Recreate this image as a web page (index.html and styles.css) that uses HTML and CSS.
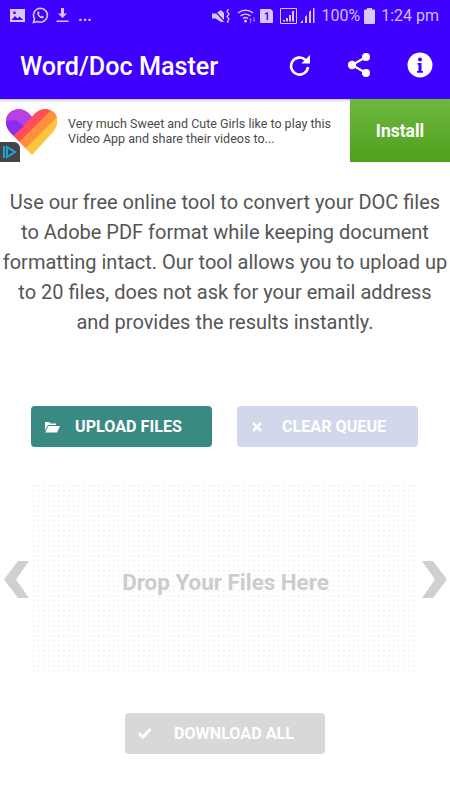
FILE: index.html
```html
<!DOCTYPE html>
<html lang="en">
<head>
    <meta charset="UTF-8">
    <meta name="viewport" content="width=device-width, initial-scale=1.0">
    <title>Word/Doc Master</title>
    <link rel="stylesheet" href="styles.css">
</head>
<body>
    <header class="top">
        <div class="status-bar">
            <div class="status-left">
                <svg class="s-icon" width="15" height="13" viewBox="0 0 15 13"><path fill="#d9c8ff" d="M0 0h15v13H0z"/><path fill="#3f00ff" d="M1.500 11l3.500-4 2.500 2.500 2-2 3.500 3.500z"/><circle cx="4.500" cy="3.800" r="1.400" fill="#3f00ff"/></svg>
                <svg class="s-icon" width="17" height="17" viewBox="0 0 17 17"><path fill="none" stroke="#d9c8ff" stroke-width="1.600" d="M8.500 1.200a7 7 0 0 0-6 10.500L1.500 15.500l3.800-1a7 7 0 1 0 3.200-13.300z"/><path fill="#d9c8ff" d="M5.800 4.800c-1 1 -.8 2.800.8 4.600 1.700 1.800 3.600 2.500 4.800 1.400l.6-1-2-1.200-.9.800c-1-.4-1.800-1.300-2.200-2.300l.8-.8-1-2.100z"/></svg>
                <svg class="s-icon" width="13" height="15" viewBox="0 0 13 15"><path fill="#d9c8ff" d="M5 0h3v5.500h3L6.500 10 2 5.500h3zM0.500 12.500h12V14H.5z"/></svg>
                <span class="dots">...</span>
            </div>
            <div class="status-right">
                <svg class="s-icon" width="13" height="14" viewBox="0 0 13 14"><path fill="#d9c8ff" d="M0 4.500h3.500L9 1l3 3v9L9 13 3.500 9.500H0z"/><path stroke="#3f00ff" stroke-width="1.200" d="M1 0l12 13"/></svg>
                <svg class="s-icon st-wave" width="4" height="14" viewBox="0 0 4 14"><path fill="none" stroke="#d9c8ff" stroke-width="1.300" d="M2.500 0L1 2.500 3 5 1 7.500 3 10 1.500 12.500 2.500 14"/></svg>
                <svg class="s-icon st-wifi" width="20" height="15" viewBox="0 0 20 15"><path fill="none" stroke="#d9c8ff" stroke-width="1.500" d="M1 5a12 12 0 0 1 15 0M3.500 8a8 8 0 0 1 10 0M6 10.500a4 4 0 0 1 5 0"/><circle cx="8.500" cy="13" r="1.500" fill="#d9c8ff"/><path fill="#9d80ff" d="M13 15v-3h-1l1.500-2 1.500 2h-1v3zM16.500 9v3h-1l1.500 2 1.500-2h-1V9z"/></svg>
                <span class="sim">1</span>
                <svg class="s-icon st-box" width="17" height="16" viewBox="0 0 17 16"><path fill="none" stroke="#d9c8ff" stroke-width="1" d="M.5.500h16v15H.5z"/><path fill="#d9c8ff" d="M3 12h2v1.500H3zM6 10h2v3.500H6zM9 7h2v6.500H9zM12 3h2v10.500h-2z"/></svg>
                <svg class="s-icon st-bars" width="15" height="15" viewBox="0 0 15 15"><path fill="#d9c8ff" d="M0 15l3-3v3zM5 15V9l2-2v8zM9 15V4l2-2v13zM13 15V0h1.500v15z"/></svg>
                <span class="s-text st-pct">100%</span>
                <svg class="s-icon st-batt" width="11" height="16" viewBox="0 0 11 16"><path fill="#d9c8ff" d="M3 0h5v1.500h2a1 1 0 0 1 1 1V15a1 1 0 0 1-1 1H1a1 1 0 0 1-1-1V2.500a1 1 0 0 1 1-1h2z"/></svg>
                <span class="s-text st-time">1:24 pm</span>
            </div>
        </div>
        <div class="app-bar">
            <h1>Word/Doc Master</h1>
            <div class="actions">
                <svg width="22" height="24" viewBox="0 0 22 24"><path fill="none" stroke="#fff" stroke-width="2.600" d="M16.500 7a8.500 8.500 0 1 0 2.500 7"/><path fill="#fff" d="M21 2v8.500h-8.500z"/></svg>
                <svg width="24" height="26" viewBox="0 0 24 26"><circle cx="19" cy="5" r="4" fill="#fff"/><circle cx="19" cy="21" r="4" fill="#fff"/><circle cx="5" cy="13" r="4.200" fill="#fff"/><path stroke="#fff" stroke-width="2.200" d="M19 5L5 13l14 8" fill="none"/></svg>
                <svg width="26" height="26" viewBox="0 0 26 26"><circle cx="13" cy="13" r="12.500" fill="#fff"/><circle cx="13" cy="7.500" r="2" fill="#3f00ff"/><path fill="#3f00ff" d="M10.500 11h4v8h1.500v1.800h-6V19h1.500v-6.200h-1z"/></svg>
            </div>
        </div>
    </header>

    <div class="ad">
        <div class="ad-logo">
            <svg width="51" height="46" viewBox="0 0 51 46">
                <defs><clipPath id="heart"><path d="M26 46L4 23C-2 16-1 6 6 2c7-3.500 14-2 20 6 6-8 13-9.500 20-6 7 4 7 14 1 21z"/></clipPath></defs>
                <g clip-path="url(#heart)">
                    <rect width="51" height="46" fill="#ffc53d"/>
                    <path fill="#ff8f3a" d="M0 0h59L13 46H0z"/>
                    <path fill="#ff4d5a" d="M0 0h46L0 46z"/>
                    <path fill="#b93fe6" d="M0 0h34L0 34z"/>
                    <path fill="#8a2df0" d="M0 12L10 11 18 17 7 27 0 20z"/>
                </g>
            </svg>
            <span class="ad-badge">
                <svg width="16" height="16" viewBox="0 0 16 16"><path fill="none" stroke="#18a6d8" stroke-width="2" d="M2 2v12M5 3l8 5-8 5z"/></svg>
            </span>
        </div>
        <p class="ad-text">Very much Sweet and Cute Girls like to play this Video App and share their videos to...</p>
        <div class="ad-install">Install</div>
    </div>

    <main>
        <p class="intro">Use our free online tool to convert your DOC files to Adobe PDF format while keeping document formatting intact. Our tool allows you to upload up to 20 files, does not ask for your email address and provides the results instantly.</p>

        <div class="btn-row">
            <button class="btn btn-upload">
                <svg class="btn-icon" width="16" height="12" viewBox="0 0 16 12"><path fill="#fff" d="M1 1h4l1.500 1.500H12V4H4L1 9.500z"/><path fill="#fff" d="M4.500 5H16l-3 6.500H1z"/></svg>
                UPLOAD FILES
            </button>
            <button class="btn btn-clear">
                <svg class="btn-icon" width="10" height="10" viewBox="0 0 10 10"><path stroke="#fff" stroke-width="2.600" d="M1 1l8 8M9 1L1 9"/></svg>
                CLEAR QUEUE
            </button>
        </div>

        <div class="drop-row">
            <svg class="arrow" width="25" height="37" viewBox="0 0 25 37"><path fill="#d0d0d0" d="M14 0h11L12 18.500 25 37H14L0 18.500z"/></svg>
            <div class="drop-zone">Drop Your Files Here</div>
            <svg class="arrow" width="25" height="37" viewBox="0 0 25 37"><path fill="#d0d0d0" d="M11 0H0l13 18.500L0 37h11l14-18.500z"/></svg>
        </div>

        <div class="download-row">
            <button class="btn btn-download">
                <svg class="btn-icon" width="14" height="11" viewBox="0 0 14 11"><path fill="none" stroke="#fff" stroke-width="3" d="M1 5.500l4 3.500 7.500-8"/></svg>
                DOWNLOAD ALL
            </button>
        </div>
    </main>
</body>
</html>
```

FILE: styles.css
```css
body {
    margin: 0;
    height: 800px;
    overflow: hidden;
    background-color: #fff;
    font-family: Roboto, "Liberation Sans", sans-serif;
}

.top {
    background-color: #3f00ff;
    height: 99px;
}

.status-bar {
    height: 31px;
    display: flex;
    justify-content: space-between;
    align-items: center;
    color: #d0bfff;
}

.status-left {
    display: flex;
    align-items: center;
    gap: 7px;
    padding-left: 10px;
}

.status-right {
    display: flex;
    align-items: center;
    padding-right: 11px;
}

.s-icon {
    display: block;
}

.st-wave { margin-left: 1px; }
.st-wifi { margin-left: 7px; }
.st-box { margin-left: 7px; }
.st-bars { margin-left: 3px; }
.st-pct { margin-left: 6px; }
.st-batt { margin-left: 4px; }
.st-time { margin-left: 6px; }

.dots {
    font-size: 16px;
    font-weight: 700;
    line-height: 16px;
    padding-left: 2px;
}

.s-text {
    font-size: 16px;
}

.sim {
    width: 13px;
    height: 14px;
    margin-left: 3px;
    background-color: #d9c8ff;
    color: #3f00ff;
    font-size: 10px;
    font-weight: 700;
    line-height: 15px;
    text-align: center;
    border-radius: 1px 4px 1px 1px;
}

.app-bar {
    height: 68px;
    display: flex;
    justify-content: space-between;
    align-items: center;
    padding: 0 17px 0 20px;
    box-sizing: border-box;
}

.app-bar h1 {
    margin: 0;
    padding-top: 3px;
    color: #fff;
    font-size: 25.200px;
    font-weight: 500;
}

.actions {
    display: flex;
    align-items: center;
    gap: 36px;
}

.ad {
    height: 63px;
    display: flex;
    align-items: stretch;
    box-shadow: inset 0 3px 3px -2px rgba(0, 0, 0, 0.3);
}

.ad-logo {
    position: relative;
    width: 68px;
    flex-shrink: 0;
    padding: 10px 0 0 6px;
    box-sizing: border-box;
}

.ad-badge {
    position: absolute;
    left: 0;
    bottom: 0;
    width: 20px;
    height: 20px;
    background-color: #444;
    border-radius: 0 6px 0 0;
    display: flex;
    align-items: center;
    justify-content: center;
}

.ad-text {
    flex: 1;
    margin: 0;
    padding-top: 17px;
    padding-right: 12px;
    color: #4a4a4a;
    font-size: 12.500px;
    line-height: 15px;
}

.ad-install {
    width: 100px;
    background: linear-gradient(#6eb83e, #4fa01f);
    color: #fff;
    font-size: 17.500px;
    font-weight: 700;
    text-align: center;
    line-height: 64px;
}

main {
    display: flex;
    flex-direction: column;
}

.intro {
    margin: 25px 0 0;
    color: #555;
    font-size: 20px;
    line-height: 30px;
    text-align: center;
}

.btn-row {
    display: flex;
    gap: 25px;
    margin: 69px 0 0 31px;
}

.btn {
    width: 181px;
    height: 41px;
    display: flex;
    align-items: center;
    border: none;
    border-radius: 4px;
    color: #fff;
    font-family: inherit;
    font-size: 16.150px;
    font-weight: 700;
    padding: 0;
}

.btn-icon {
    display: block;
}

.btn-upload {
    background-color: #3a8a84;
    gap: 15px;
    padding-left: 13px;
}

.btn-clear {
    background-color: #d2d8ec;
    gap: 20px;
    padding-left: 15px;
}

.btn-download {
    width: 200px;
    background-color: #d8d8d8;
    gap: 22px;
    padding-left: 13px;
}

.drop-row {
    display: flex;
    align-items: center;
    margin: 38px 0 0 4px;
    gap: 4px;
}

.drop-zone {
    width: 385px;
    height: 189px;
    display: flex;
    align-items: center;
    justify-content: center;
    padding-top: 4px;
    box-sizing: border-box;
    color: #ccc;
    font-size: 22.400px;
    font-weight: 700;
    background-image: radial-gradient(#f2f2f2 1px, transparent 1px);
    background-size: 5px 5px;
    background-position: -2px -2px;
}

.download-row {
    margin-top: 39px;
    display: flex;
    justify-content: center;
}
```
